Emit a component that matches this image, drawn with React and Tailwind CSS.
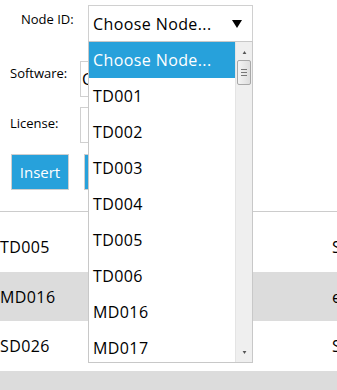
import React from "react";

const items = ["Choose Node...", "TD001", "TD002", "TD003", "TD004", "TD005", "TD006", "MD016", "MD017"];

function Arrow({ className, down }) {
  return (
    <svg className={className} viewBox="0 0 10 8" width="10" height="8">
      <polygon points={down ? "0,0 10,0 5,8" : "0,8 10,8 5,0"} fill="currentColor" />
    </svg>
  );
}

export default function App() {
  return (
    <div className="relative w-[337px] h-[390px] overflow-hidden bg-white text-black font-['Open_Sans','Noto_Sans',sans-serif]">
      <div className="h-[211px] flex flex-col">
        <div className="flex mt-[5px]">
          <div className="w-[88px] pl-[21px] pt-[6px] text-[13px] leading-[16px]">Node ID:</div>
          <div className="w-[165px] h-[37px] border border-[#d0d0d0] flex items-center pl-[4px] pr-[10px] justify-between text-[16px] tracking-[0.4px]">
            <span>Choose Node...</span>
            <Arrow down className="w-[10px] h-[8px] text-black" />
          </div>
        </div>
        <div className="flex mt-[19px]">
          <div className="w-[80px] pl-[10px] pt-[4px] text-[13px] leading-[16px]">Software:</div>
          <div className="w-[170px] h-[36px] border border-[#d0d0d0] flex items-center pl-[1px] text-[16px]">Choose</div>
        </div>
        <div className="flex mt-[10px]">
          <div className="w-[80px] pl-[10px] pt-[8px] text-[13px] leading-[16px]">License:</div>
          <div className="w-[170px] h-[36px] border border-[#d0d0d0]"></div>
        </div>
        <div className="flex mt-[11px] pl-[11px] gap-[15px]">
          <button className="w-[58px] h-[36px] bg-[#27a1db] border border-[#cfcfcf] text-white text-[15px]">Insert</button>
          <button className="w-[80px] h-[36px] bg-[#27a1db] border border-[#cfcfcf] text-white text-[15px]">Update</button>
        </div>
      </div>
      <div className="border-t border-[#cccccc]">
        <div className="mt-[10px] h-[50px] flex items-center text-[16px] tracking-[0.4px] whitespace-nowrap">
          <span className="w-[332px] shrink-0">TD005</span><span className="shrink-0">Software</span>
        </div>
        <div className="h-[49px] flex items-center bg-[#dcdcdc] text-[16px] tracking-[0.4px] whitespace-nowrap">
          <span className="w-[332px] shrink-0">MD016</span><span className="shrink-0">eclipse</span>
        </div>
        <div className="h-[50px] flex items-center text-[16px] tracking-[0.4px] whitespace-nowrap">
          <span className="w-[332px] shrink-0">SD026</span><span className="shrink-0">Skype</span>
        </div>
        <div className="h-[50px] bg-[#dcdcdc]"></div>
      </div>

      <div className="absolute left-[88px] top-[41px] w-[165px] h-[322px] border border-[#c8c8c8] bg-white flex overflow-hidden">
        <div className="flex-1 flex flex-col">
          {items.map((it, i) => (
            <div
              key={it}
              className={
                "h-[36px] shrink-0 flex items-center pl-[4px] text-[16px] tracking-[0.4px] " +
                (i === 0 ? "bg-[#27a1db] text-white" : "text-black")
              }
            >
              {it}
            </div>
          ))}
        </div>
        <div className="w-[17px] bg-[#efefef] border-l border-[#e4e4e4] flex flex-col items-center">
          <Arrow className="w-[5px] h-[3px] mt-[9px] text-[#555]" />
          <div className="mt-[6px] w-[14px] h-[25px] border border-[#a8a8a8] rounded-[2px] bg-gradient-to-r from-[#f4f4f4] to-[#dedede] flex flex-col items-center justify-center gap-[2px]">
            <div className="w-[6px] h-px bg-[#777]"></div>
            <div className="w-[6px] h-px bg-[#777]"></div>
            <div className="w-[6px] h-px bg-[#777]"></div>
          </div>
          <div className="flex-1"></div>
          <Arrow down className="w-[5px] h-[3px] mb-[8px] text-[#555]" />
        </div>
      </div>
    </div>
  );
}
